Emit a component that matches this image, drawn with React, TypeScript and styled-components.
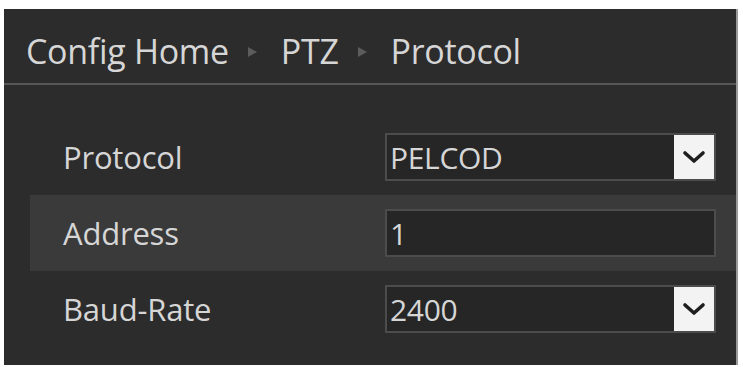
import React from "react";
import styled, { createGlobalStyle } from "styled-components";

const Global = createGlobalStyle`
  html, body { margin: 0; padding: 0; background: #ffffff; }
  body { font-family: "Open Sans", "Noto Sans", sans-serif; }
`;

const Panel = styled.div`
  margin: 9px 0 0 4px;
  width: 734px;
  height: 356px;
  background: #2c2c2c;
  box-sizing: border-box;
  border-right: 2px solid #9a9a9a;
  display: flex;
  flex-direction: column;
`;

const Header = styled.div`
  height: 76px;
  display: flex;
  align-items: center;
  padding-left: 22px;
  padding-top: 9px;
  box-sizing: border-box;
  border-bottom: 2px solid #575757;
  color: #d6d6d6;
  font-size: 34px;
  letter-spacing: -0.3px;
`;

const Crumb = styled.span``;

const Sep = styled.span`
  width: 0;
  height: 0;
  border-top: 5px solid transparent;
  border-bottom: 5px solid transparent;
  border-left: 9px solid #5c5c5c;
  margin: 2px 24px 0 19px;
`;

const Body = styled.div`
  padding: 34px 0 0 26px;
  display: flex;
  flex-direction: column;
`;

const Row = styled.div<{ $hl?: boolean }>`
  height: 76px;
  display: flex;
  align-items: center;
  padding-left: 33px;
  background: ${(p) => (p.$hl ? "#3a3a3a" : "transparent")};
`;

const Label = styled.div`
  width: 322px;
  color: #d6d6d6;
  font-size: 31px;
  letter-spacing: -0.2px;
`;

const Field = styled.div`
  width: 331px;
  height: 48px;
  box-sizing: border-box;
  border: 2px solid #4c4c4c;
  background: #262626;
  display: flex;
  align-items: center;
  color: #d6d6d6;
  font-size: 30px;
  letter-spacing: -0.3px;
`;

const Value = styled.div`
  flex: 1;
  padding-left: 3px;
`;

const Arrow = styled.div`
  width: 40px;
  height: 100%;
  background: #f3f3f3;
  display: flex;
  align-items: center;
  justify-content: center;
`;

const Chevron = () => (
  <svg width="24" height="16" viewBox="0 0 24 16">
    <path d="M3 4 L12 12 L21 4" fill="none" stroke="#1e1e1e" strokeWidth="3.6" strokeLinecap="round" strokeLinejoin="round" />
  </svg>
);

export default function App() {
  return (
    <>
      <Global />
      <Panel>
        <Header>
          <Crumb>Config Home</Crumb>
          <Sep />
          <Crumb>PTZ</Crumb>
          <Sep />
          <Crumb>Protocol</Crumb>
        </Header>
        <Body>
          <Row>
            <Label>Protocol</Label>
            <Field>
              <Value>PELCOD</Value>
              <Arrow><Chevron /></Arrow>
            </Field>
          </Row>
          <Row $hl>
            <Label>Address</Label>
            <Field>
              <Value>1</Value>
            </Field>
          </Row>
          <Row>
            <Label>Baud-Rate</Label>
            <Field>
              <Value>2400</Value>
              <Arrow><Chevron /></Arrow>
            </Field>
          </Row>
        </Body>
      </Panel>
    </>
  );
}
